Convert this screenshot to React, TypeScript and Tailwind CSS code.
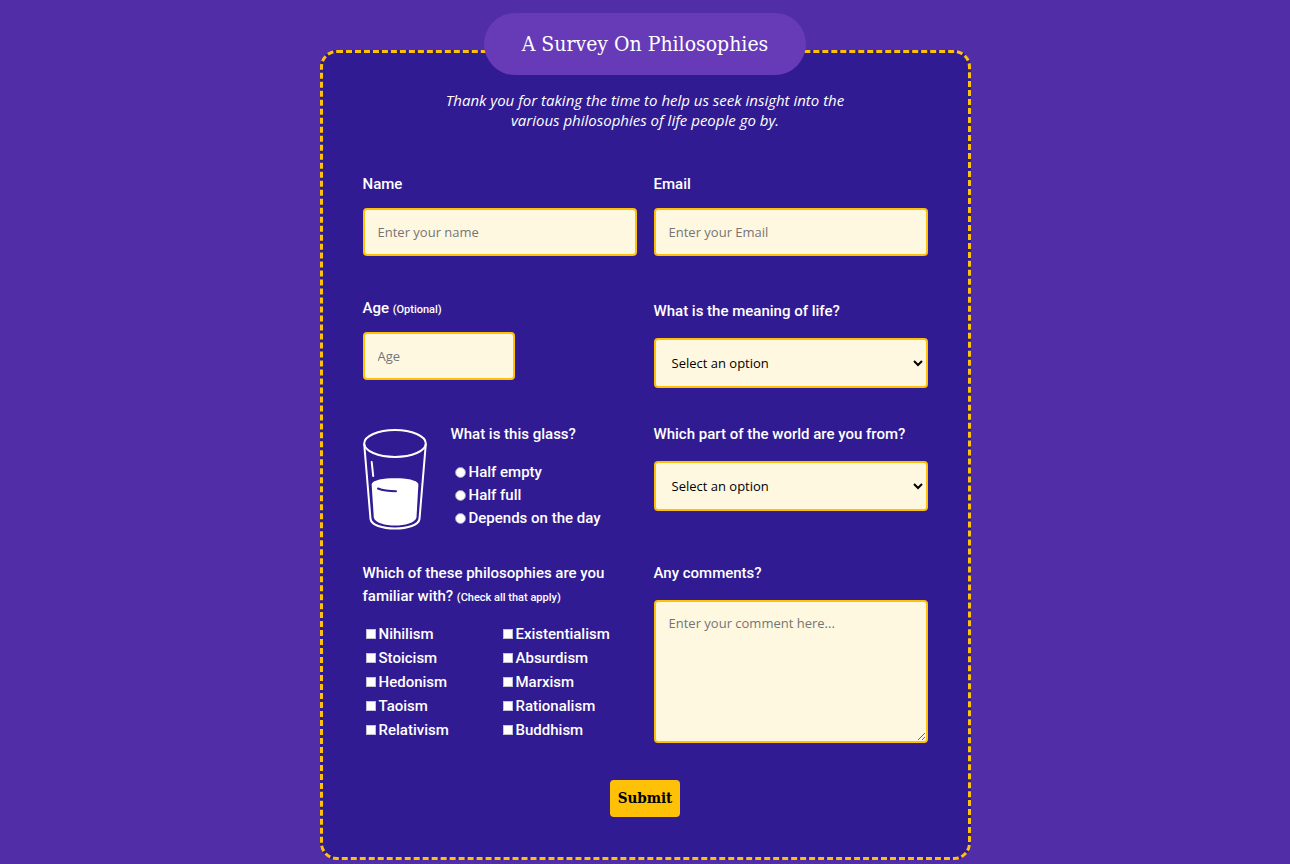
import type { ReactNode } from "react";

const fieldClass =
  "w-full rounded-[4px] border-2 border-[#ffc107] bg-[#fff8e1] font-['Open_Sans',sans-serif] text-[13px] text-black placeholder:text-[#757575]";

const glassAnswers = ["Half empty", "Half full", "Depends on the day"];

const philosophies = [
  "Nihilism",
  "Existentialism",
  "Stoicism",
  "Absurdism",
  "Hedonism",
  "Marxism",
  "Taoism",
  "Rationalism",
  "Relativism",
  "Buddhism",
];

const meanings = ["Happiness", "Knowledge", "Love", "There is none"];
const regions = ["Africa", "Asia", "Europe", "North America", "Oceania", "South America"];

function SelectField({ id, label, options }: { id: string; label: string; options: string[] }) {
  return (
    <div>
      <label htmlFor={id} className="mb-3 block py-[3px]">
        {label}
      </label>
      <select id={id} defaultValue="" className={`${fieldClass} h-[50px] px-3`}>
        <option value="">Select an option</option>
        {options.map((option) => (
          <option key={option}>{option}</option>
        ))}
      </select>
    </div>
  );
}

function Hint({ children }: { children: ReactNode }) {
  return <span className="text-[11px] leading-none">{children}</span>;
}

function Glass() {
  return (
    <svg viewBox="0 0 64 102" className="mt-[9px] w-16 shrink-0" fill="none" stroke="#fff" aria-hidden="true">
      <ellipse cx="32" cy="14.5" rx="30.8" ry="13.4" strokeWidth="2" />
      <path d="M1.2 15 L7.5 90 C8.5 96 19 99.5 32 99.5 S55.5 96 56.5 90 L62.8 15" strokeWidth="2" />
      <path
        d="M8.600 55 C10.500 51 20 49.300 32 49.300 S53.500 51 55.400 55 L53.500 88.500 C52 94 42 96.500 32 96.500 S12 94 10.800 88.500 Z"
        fill="#fff"
        stroke="none"
      />
      <path d="M8.700 33 L10.200 47" strokeWidth="2" strokeLinecap="round" />
      <path d="M15 59.500 C20 61.500 26 62.200 33 62.200" stroke="#311b92" strokeWidth="2" strokeLinecap="round" />
    </svg>
  );
}

export default function App() {
  return (
    <main className="min-h-screen bg-[#512da8] px-4 pt-[13px] pb-[5px] font-[Roboto,sans-serif] text-[15px] leading-[23px] font-medium text-white">
      <div className="mx-auto flex max-w-[651px] flex-col items-center">
        <h1 className="relative z-10 -mb-[25px] rounded-full bg-[#673ab7] px-[38px] py-4 font-['Roboto_Slab','DejaVu_Serif_Condensed','DejaVu_Serif',serif] text-[21px] leading-[30px] font-normal">
          A Survey On Philosophies
        </h1>
        <form
          className="w-full rounded-[17px] border-3 border-dashed border-[#ffc107] bg-[#311b92] px-10 pt-[37px] pb-10"
          onSubmit={(event) => event.preventDefault()}
        >
          <p className="mx-auto max-w-[410px] text-center font-['Open_Sans',sans-serif] text-[15px] leading-5 font-normal italic">
            Thank you for taking the time to help us seek insight into the various philosophies of life people go by.
          </p>

          <div className="mt-[43px] grid grid-cols-1 gap-x-[17px] gap-y-7 sm:grid-cols-2">
            <div className="pb-[13px]">
              <label htmlFor="name" className="mb-3 block">
                Name
              </label>
              <input id="name" type="text" placeholder="Enter your name" className={`${fieldClass} h-12 px-[13px]`} />
            </div>
            <div className="pb-[13px]">
              <label htmlFor="email" className="mb-3 block">
                Email
              </label>
              <input id="email" type="email" placeholder="Enter your Email" className={`${fieldClass} h-12 px-[13px]`} />
            </div>

            <div className="pb-1">
              <label htmlFor="age" className="mb-3 block">
                Age <Hint>(Optional)</Hint>
              </label>
              <input
                id="age"
                type="number"
                placeholder="Age"
                className={`${fieldClass} h-12 max-w-[152px] px-[13px]`}
              />
            </div>
            <div className="pb-1">
              <SelectField id="meaning" label="What is the meaning of life?" options={meanings} />
            </div>

            <div className="flex gap-6">
              <Glass />
              <fieldset>
                <legend className="mb-3 py-[3px]">What is this glass?</legend>
                {glassAnswers.map((answer) => (
                  <label key={answer} className="flex items-center gap-[3px] pl-1">
                    <input
                      type="radio"
                      name="glass"
                      className="size-[11px] appearance-none rounded-full border border-[#9a94b8] bg-white checked:border-[3px] checked:border-[#0075ff]"
                    />
                    {answer}
                  </label>
                ))}
              </fieldset>
            </div>
            <SelectField id="region" label="Which part of the world are you from?" options={regions} />

            <fieldset>
              <legend className="mb-[14px] pt-[3px]">
                Which of these philosophies are you familiar with? <Hint>(Check all that apply)</Hint>
              </legend>
              <div className="grid grid-cols-2">
                {philosophies.map((name) => (
                  <label key={name} className="flex h-6 items-center gap-[3px] pl-[3px]">
                    <input
                      type="checkbox"
                      name="philosophies"
                      className="size-[10px] appearance-none border border-[#c4c0d6] bg-white checked:bg-[#0075ff]"
                    />
                    {name}
                  </label>
                ))}
              </div>
            </fieldset>
            <div>
              <label htmlFor="comments" className="mb-3 block py-[3px]">
                Any comments?
              </label>
              <textarea
                id="comments"
                placeholder="Enter your comment here..."
                className={`${fieldClass} block h-[143px] px-[13px] py-3 leading-[18px]`}
              />
            </div>
          </div>

          <button
            type="submit"
            className="mx-auto mt-[37px] block rounded-[4px] bg-[#ffc107] px-2 py-[7px] font-['Roboto_Slab','DejaVu_Serif_Condensed','DejaVu_Serif',serif] text-[15px] leading-[23px] font-semibold text-black"
          >
            Submit
          </button>
        </form>
      </div>
    </main>
  );
}
